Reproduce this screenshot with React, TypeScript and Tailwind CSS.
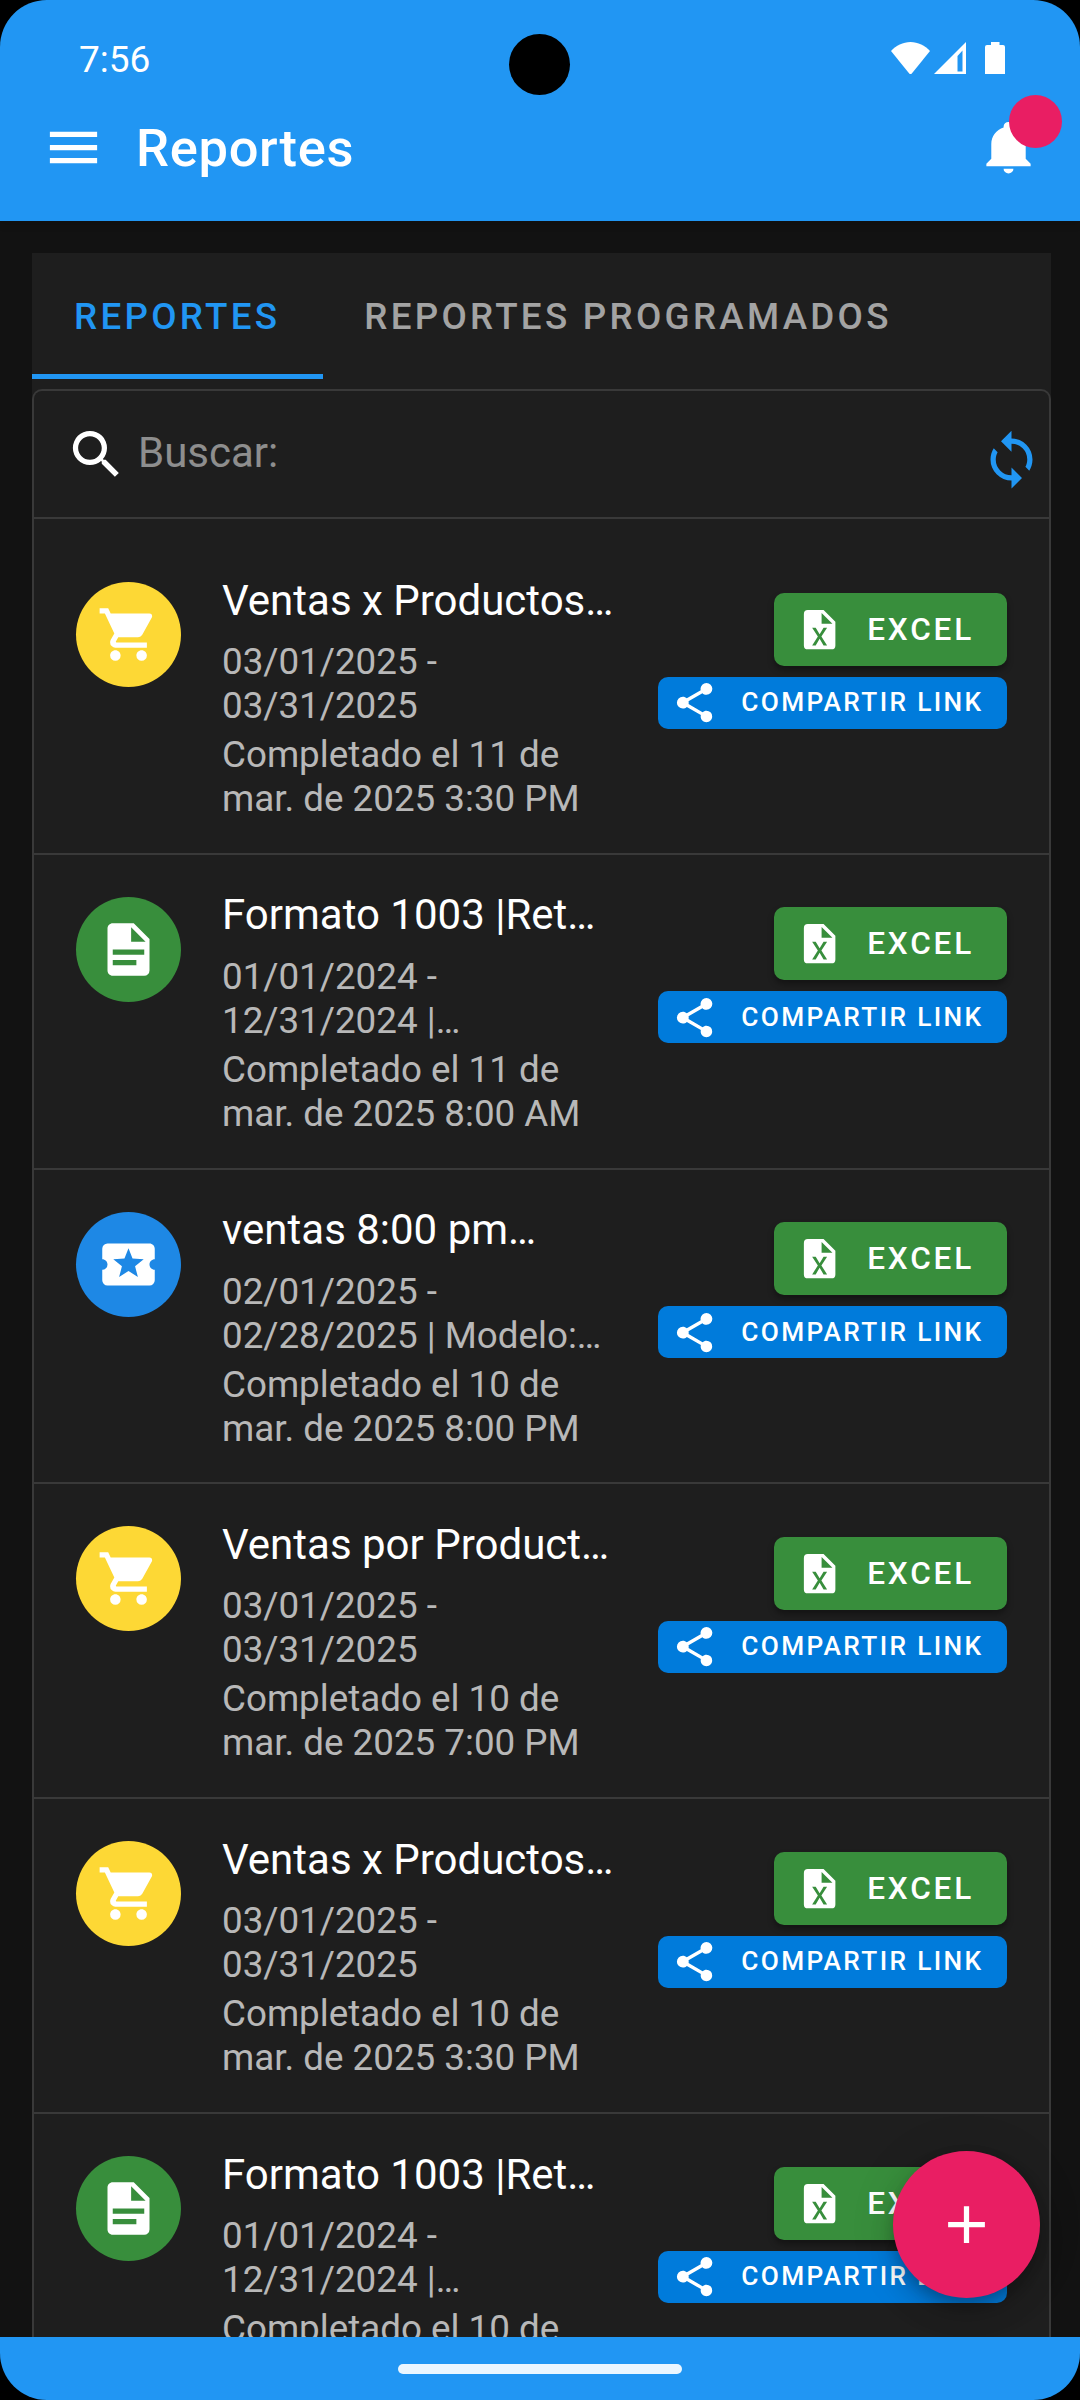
const icons = {
  menu: "M3,6H21V8H3V6M3,11H21V13H3V11M3,16H21V18H3V16Z",
  bell: "M21,19V20H3V19L5,17V11C5,7.9 7.03,5.17 10,4.29C10,4.19 10,4.1 10,4A2,2 0 0,1 12,2A2,2 0 0,1 14,4C14,4.1 14,4.19 14,4.29C16.97,5.17 19,7.9 19,11V17L21,19M14,21A2,2 0 0,1 12,23A2,2 0 0,1 10,21",
  magnify: "M9.5,3A6.5,6.5 0 0,1 16,9.5C16,11.11 15.41,12.59 14.44,13.73L14.71,14H15.5L20.5,19L19,20.5L14,15.5V14.71L13.73,14.44C12.59,15.41 11.11,16 9.5,16A6.5,6.5 0 0,1 3,9.5A6.5,6.5 0 0,1 9.5,3M9.5,5C7,5 5,7 5,9.5C5,12 7,14 9.5,14C12,14 14,12 14,9.5C14,7 12,5 9.5,5Z",
  sync: "M12,18A6,6 0 0,1 6,12C6,11 6.25,10.03 6.7,9.2L5.24,7.74C4.46,8.97 4,10.43 4,12A8,8 0 0,0 12,20V23L16,19L12,15M12,4V1L8,5L12,9V6A6,6 0 0,1 18,12C18,13 17.75,13.97 17.3,14.8L18.76,16.26C19.54,15.03 20,13.57 20,12A8,8 0 0,0 12,4Z",
  cart: "M17,18C15.89,18 15,18.89 15,20A2,2 0 0,0 17,22A2,2 0 0,0 19,20C19,18.89 18.1,18 17,18M1,2V4H3L6.6,11.59L5.24,14.04C5.09,14.32 5,14.65 5,15A2,2 0 0,0 7,17H19V15H7.42A0.25,0.25 0 0,1 7.17,14.75C7.17,14.7 7.18,14.66 7.2,14.63L8.1,13H15.55C16.3,13 16.96,12.58 17.3,11.97L20.88,5.5C20.95,5.34 21,5.17 21,5A1,1 0 0,0 20,4H5.21L4.27,2M7,18C5.89,18 5,18.89 5,20A2,2 0 0,0 7,22A2,2 0 0,0 9,20C9,18.89 8.1,18 7,18Z",
  document: "M13,9H18.5L13,3.5V9M6,2H14L20,8V20A2,2 0 0,1 18,22H6C4.89,22 4,21.1 4,20V4C4,2.89 4.89,2 6,2M15,18V16H6V18H15M18,14V12H6V14H18Z",
  ticket: "M15.58,16.8L12,14.5L8.42,16.8L9.5,12.68L6.21,10L10.46,9.74L12,5.8L13.54,9.74L17.79,10L14.5,12.68M20,12C20,10.89 20.9,10 22,10V6C22,4.89 21.1,4 20,4H4A2,2 0 0,0 2,6V10C3.11,10 4,10.9 4,12A2,2 0 0,1 2,14V18A2,2 0 0,0 4,20H20A2,2 0 0,0 22,18V14C20.89,14 20,13.1 20,12Z",
  excel: "M14,2H6A2,2 0 0,0 4,4V20A2,2 0 0,0 6,22H18A2,2 0 0,0 20,20V8L14,2M15.8,20H14L12,16.6L10,20H8.2L11.1,15.5L8.2,11H10L12,14.4L14,11H15.8L12.9,15.5L15.8,20M13,9V3.5L18.5,9H13Z",
  share: "M18,16.08C17.24,16.08 16.56,16.38 16.04,16.85L8.91,12.7C8.96,12.47 9,12.24 9,12C9,11.76 8.96,11.53 8.91,11.3L15.96,7.19C16.5,7.69 17.21,8 18,8A3,3 0 0,0 21,5A3,3 0 0,0 18,2A3,3 0 0,0 15,5C15,5.24 15.04,5.47 15.09,5.7L8.04,9.81C7.5,9.31 6.79,9 6,9A3,3 0 0,0 3,12A3,3 0 0,0 6,15C6.79,15 7.5,14.69 8.04,14.19L15.16,18.34C15.11,18.55 15.08,18.77 15.08,19C15.08,20.61 16.39,21.91 18,21.91C19.61,21.91 20.92,20.61 20.92,19A2.92,2.92 0 0,0 18,16.08Z",
  plus: "M19,13H13V19H11V13H5V11H11V5H13V11H19V13Z",
};

type IconName = keyof typeof icons;

const reports: { icon: IconName; color: string; title: string; range: string[]; done: string[] }[] = [
  {
    icon: "cart",
    color: "bg-[#fdd835]",
    title: "Ventas x Productos…",
    range: ["03/01/2025 -", "03/31/2025"],
    done: ["Completado el 11 de", "mar. de 2025 3:30 PM"],
  },
  {
    icon: "document",
    color: "bg-[#388e3c]",
    title: "Formato 1003 |Ret…",
    range: ["01/01/2024 -", "12/31/2024 |…"],
    done: ["Completado el 11 de", "mar. de 2025 8:00 AM"],
  },
  {
    icon: "ticket",
    color: "bg-[#1e88e5]",
    title: "ventas 8:00 pm…",
    range: ["02/01/2025 -", "02/28/2025 | Modelo:…"],
    done: ["Completado el 10 de", "mar. de 2025 8:00 PM"],
  },
  {
    icon: "cart",
    color: "bg-[#fdd835]",
    title: "Ventas por Product…",
    range: ["03/01/2025 -", "03/31/2025"],
    done: ["Completado el 10 de", "mar. de 2025 7:00 PM"],
  },
  {
    icon: "cart",
    color: "bg-[#fdd835]",
    title: "Ventas x Productos…",
    range: ["03/01/2025 -", "03/31/2025"],
    done: ["Completado el 10 de", "mar. de 2025 3:30 PM"],
  },
  {
    icon: "document",
    color: "bg-[#388e3c]",
    title: "Formato 1003 |Ret…",
    range: ["01/01/2024 -", "12/31/2024 |…"],
    done: ["Completado el 10 de"],
  },
];

function Icon({ name, className }: { name: IconName; className: string }) {
  return (
    <svg viewBox="0 0 24 24" fill="currentColor" className={`shrink-0 ${className}`}>
      <path d={icons[name]} />
    </svg>
  );
}

function StatusBar() {
  return (
    <div className="flex h-[116px] items-center justify-between pl-[79px] pr-[75px]">
      <span className="pt-[2px] text-[37px] leading-none">7:56</span>
      <div className="flex items-center">
        <svg viewBox="0 0 39 33" fill="currentColor" className="h-[33px] w-[39px]">
          <path d="M0 9C5 3.5 12 0 19.5 0S34 3.5 39 9L21 31.2Q19.5 33 18 31.2Z" />
        </svg>
        <svg viewBox="0 0 32 32" fill="currentColor" fillRule="evenodd" className="ml-1 h-8 w-8">
          <path d="M32 0V32H0ZM28.500 8.500L23.500 14V29.500H28.500Z" />
        </svg>
        <svg viewBox="0 0 20 32" fill="currentColor" className="ml-[19px] h-8 w-5">
          <path d="M6 0H14.500V3H18Q20 3 20 5V32H0V5Q0 3 2 3H6Z" />
        </svg>
      </div>
      <div className="absolute left-[509px] top-[34px] size-[61px] rounded-full bg-black" />
    </div>
  );
}

function Header() {
  return (
    <header className="relative z-10 h-[221px] shrink-0 bg-[#2196f3] shadow-[0_3px_8px_rgba(0,0,0,0.15)]">
      <StatusBar />
      <div className="flex h-[63px] items-center pl-[42px] pr-[42px]">
        <Icon name="menu" className="size-[63px]" />
        <h1 className="ml-[31px] pt-[2px] text-[52.5px] font-medium leading-[63px] tracking-[0.66px]">Reportes</h1>
        <div className="relative mb-[2px] ml-auto">
          <Icon name="bell" className="size-[59px]" />
          <span className="absolute left-[30px] top-[-22px] size-[52.5px] rounded-full bg-[#e91e63]" />
        </div>
      </div>
    </header>
  );
}

function Tabs() {
  return (
    <div className="flex h-[126px] text-[36.75px] font-medium uppercase tracking-[3.28px]">
      <div className="flex items-center border-b-[5px] border-[#2196f3] pl-[42px] pr-[43px] pt-[7px] text-[#2196f3]">
        Reportes
      </div>
      <div className="flex items-center pl-[41px] pr-[42px] pt-[2px] text-white/60">Reportes programados</div>
    </div>
  );
}

function ReportItem({ report }: { report: (typeof reports)[number] }) {
  return (
    <li className="flex h-[314.8px] shrink-0 items-start border-b-2 border-[#393939] px-[42px]">
      <div className={`mt-[42px] flex size-[105px] shrink-0 items-center justify-center rounded-full ${report.color}`}>
        <Icon name={report.icon} className="size-[63px]" />
      </div>
      <div className="ml-[41px] mt-[34.6px] whitespace-nowrap">
        <h2 className="text-[42px] leading-[51px]">{report.title}</h2>
        <div className="mt-[14.4px] text-[36.75px] leading-[44px] text-white/70">
          {report.range.map((line) => (
            <p key={line}>{line}</p>
          ))}
        </div>
        <div className="mt-[5px] text-[36.75px] leading-[44px] text-white/70">
          {report.done.map((line) => (
            <p key={line}>{line}</p>
          ))}
        </div>
      </div>
      <div className="ml-auto mt-[52.7px] flex shrink-0 flex-col items-end gap-[11px] font-medium">
        <button className="flex h-[73px] w-[233px] items-center rounded-[10px] bg-[#388e3c] pl-[22px] text-[31.5px] tracking-[2.81px] shadow-[0_4px_6px_rgba(0,0,0,0.35)]">
          <Icon name="excel" className="size-[47.25px]" />
          <span className="ml-[24px]">EXCEL</span>
        </button>
        <button className="flex h-[52px] w-[349px] items-center rounded-[10px] bg-[#007bdb] pl-[13px] text-[26.25px] tracking-[2.34px]">
          <Icon name="share" className="size-[47.25px]" />
          <span className="ml-[23px]">COMPARTIR LINK</span>
        </button>
      </div>
    </li>
  );
}

export default function App() {
  return (
    <div className="h-[2400px] w-[1080px] bg-black font-['Roboto',sans-serif] text-white">
      <div className="relative flex h-full flex-col overflow-hidden rounded-[47px] bg-[#121212]">
        <Header />

        <main className="min-h-0 flex-1 overflow-hidden pl-8 pr-[29px] pt-8">
          <div className="h-full bg-[#1e1e1e]">
            <Tabs />
            <div className="mt-[10px] h-full rounded-t-[10px] border-2 border-b-0 border-[#393939]">
              <div className="flex h-32 items-center border-b-2 border-[#393939] pl-[31px] pr-[6px]">
                <Icon name="magnify" className="size-[63px]" />
                <span className="mb-[2px] ml-[10px] text-[42px] leading-none text-white/50">Buscar:</span>
                <Icon name="sync" className="ml-auto mt-[10px] size-[63px] text-[#2196f3]" />
              </div>
              <ul className="pt-[21px]">
                {reports.map((report, index) => (
                  <ReportItem key={index} report={report} />
                ))}
              </ul>
            </div>
          </div>
        </main>

        {/* New report */}
        <button className="absolute bottom-[102px] right-[40px] flex size-[147px] items-center justify-center rounded-full bg-[#e91e63] shadow-[0_8px_13px_-3px_rgba(0,0,0,0.2),0_16px_26px_rgba(0,0,0,0.14),0_3px_47px_rgba(0,0,0,0.12)]">
          <Icon name="plus" className="size-[63px]" />
        </button>

        <footer className="z-10 flex h-[63px] shrink-0 items-center justify-center bg-[#2196f3]">
          <div className="h-[10px] w-[284px] rounded-full bg-[#ebf6ff]" />
        </footer>
      </div>
    </div>
  );
}
